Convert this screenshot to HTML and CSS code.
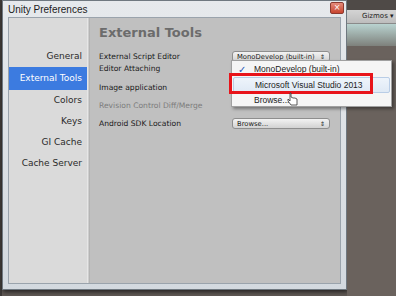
FILE: index.html
```html
<!DOCTYPE html>
<html>
<head>
    <title>Unity Preferences</title>
    <link rel="stylesheet" href="styles.css">
</head>
<body>
    <div class="screen">
        <div class="edge"></div>

        <div class="window">
            <div class="titlebar">
                <span class="title">Unity Preferences</span>
                <span class="close">&#215;</span>
            </div>
            <div class="frame">
                <div class="sidebar">
                    <div class="tab">General</div>
                    <div class="tab active">External Tools</div>
                    <div class="tab">Colors</div>
                    <div class="tab">Keys</div>
                    <div class="tab">GI Cache</div>
                    <div class="tab">Cache Server</div>
                </div>
                <div class="divider"></div>
                <div class="content">
                    <h1>External Tools</h1>
                    <div class="row">
                        <span class="label">External Script Editor</span>
                        <span class="dropdown">MonoDevelop (built-in)<i>&#8661;</i></span>
                    </div>
                    <div class="row tight">
                        <span class="label">Editor Attaching</span>
                    </div>
                    <div class="row">
                        <span class="label">Image application</span>
                    </div>
                    <div class="row">
                        <span class="label disabled">Revision Control Diff/Merge</span>
                    </div>
                    <div class="row">
                        <span class="label">Android SDK Location</span>
                        <span class="dropdown">Browse...<i>&#8661;</i></span>
                    </div>
                </div>
            </div>
        </div>

        <div class="scene">
            <div class="scene-top"></div>
            <div class="toolbar">Gizmos &#9662;</div>
            <div class="sky"></div>
            <div class="ground"></div>
        </div>

        <!-- popup menu lies over the window -->
        <div class="menu">
            <div class="item"><span class="check">&#10003;</span>MonoDevelop (built-in)</div>
            <div class="item hover">Microsoft Visual Studio 2013</div>
            <div class="item">Browse...</div>
        </div>
        <div class="highlight"></div>
        <svg class="cursor" width="12" height="14" viewBox="0 0 12 14">
            <path d="M3 1 L3 9 L1 7 L1 9 L4 13 L10 13 L10 7 L8 6 L6 6 L4 5 L4 1 Z" fill="#fff" stroke="#333" stroke-width="0.8"/>
        </svg>
    </div>
</body>
</html>
```

FILE: styles.css
```css
body {
    margin: 0;
    background-color: #6a625d;
    font-family: 'DejaVu Sans', Verdana, sans-serif;
}

.screen {
    position: relative;
    display: flex;
    width: 396px;
    height: 296px;
    overflow: hidden;
    background-color: #5f5854;
}

.edge {
    width: 2px;
    background-color: #3e3a38;
}

.window {
    width: 345px;
    height: 290px;
    display: flex;
    flex-direction: column;
    background: linear-gradient(#e6e9ec, #d3d9df);
    border: 1px solid #6f7880;
    box-sizing: border-box;
    box-shadow: 1px 2px 4px rgba(0, 0, 0, 0.6);
}

.titlebar {
    height: 16px;
    display: flex;
    align-items: center;
    justify-content: space-between;
    padding: 0 2px 0 5px;
}

.title {
    font-family: 'Liberation Sans', Arial, sans-serif;
    font-size: 10px;
    color: #1c1c1c;
}

.close {
    width: 12px;
    height: 10px;
    margin-top: -2px;
    background: linear-gradient(#e58a7a, #c8452f);
    border: 1px solid #8c3a30;
    border-radius: 2px;
    color: #fff;
    font-size: 8px;
    line-height: 10px;
    text-align: center;
}

.frame {
    flex: 1;
    display: flex;
    margin: 0 5px 5px 5px;
    border: 1px solid #9aa3ac;
}

.sidebar {
    width: 78px;
    background-color: #dadada;
    padding-top: 28px;
}

.tab {
    height: 21px;
    line-height: 21px;
    text-align: right;
    padding-right: 5px;
    font-size: 9px;
    color: #2a2a2a;
}

.tab.active {
    height: 23px;
    line-height: 23px;
    background-color: #3c7be0;
    color: #ffffff;
}

.divider {
    width: 3px;
    background: linear-gradient(90deg, #f2f2f2, #a8a8a8);
}

.content {
    flex: 1;
    background-color: #c0c0c0;
    padding: 7px 10px 0 9px;
}

h1 {
    margin: 0 0 10px 0;
    font-size: 13px;
    font-weight: bold;
    color: #6c6c6c;
}

.row {
    height: 13px;
    display: flex;
    align-items: center;
    justify-content: space-between;
    margin-bottom: 5px;
}

.row.tight {
    margin-top: -6px;
    margin-bottom: 6px;
}

.label {
    font-size: 7.6px;
    color: #1a1a1a;
}

.label.disabled {
    color: #7c7c7c;
}

.dropdown {
    width: 88px;
    height: 9px;
    display: flex;
    align-items: center;
    justify-content: space-between;
    padding: 0 4px;
    background: linear-gradient(#f3f3f3, #d2d2d2);
    border: 1px solid #8e8e8e;
    border-radius: 3px;
    font-size: 6.8px;
    color: #1a1a1a;
}

.dropdown i {
    font-style: normal;
    font-size: 6px;
}

.scene {
    flex: 1;
    display: flex;
    flex-direction: column;
}

.scene-top {
    height: 10px;
    background-color: #4f4a47;
}

.toolbar {
    height: 13px;
    line-height: 13px;
    background: linear-gradient(#d4d4d4, #bdbdbd);
    border-bottom: 1px solid #8a8a8a;
    padding-left: 15px;
    font-size: 7px;
    color: #222;
    white-space: nowrap;
}

.sky {
    height: 22px;
    background: linear-gradient(#b9d3d0, #7e817c);
}

.ground {
    flex: 1;
    background-color: #6a625d;
}

.menu {
    position: absolute;
    left: 231px;
    top: 60px;
    width: 161px;
    height: 47px;
    background-color: #f5f5f5;
    border: 1px solid #a0a0a0;
    box-shadow: 2px 2px 3px rgba(0, 0, 0, 0.4);
    padding-top: 1px;
    box-sizing: border-box;
}

.item {
    height: 15px;
    line-height: 15px;
    padding-left: 22px;
    font-family: 'Liberation Sans', Arial, sans-serif;
    font-size: 8.5px;
    color: #1c1c1c;
    position: relative;
}

.item.hover {
    height: 14px;
    background: linear-gradient(#eef4fb, #dfe9f5);
    border: 1px solid #b9cde6;
    border-radius: 2px;
    margin: 0 1px;
    line-height: 14px;
    padding-left: 21px;
}

.check {
    position: absolute;
    left: 6px;
    color: #2456b8;
    font-size: 10px;
}

.highlight {
    position: absolute;
    left: 229px;
    top: 73px;
    width: 144px;
    height: 21px;
    border: 3px solid #e8141a;
    box-sizing: border-box;
}

.cursor {
    position: absolute;
    left: 287px;
    top: 92px;
}
```
